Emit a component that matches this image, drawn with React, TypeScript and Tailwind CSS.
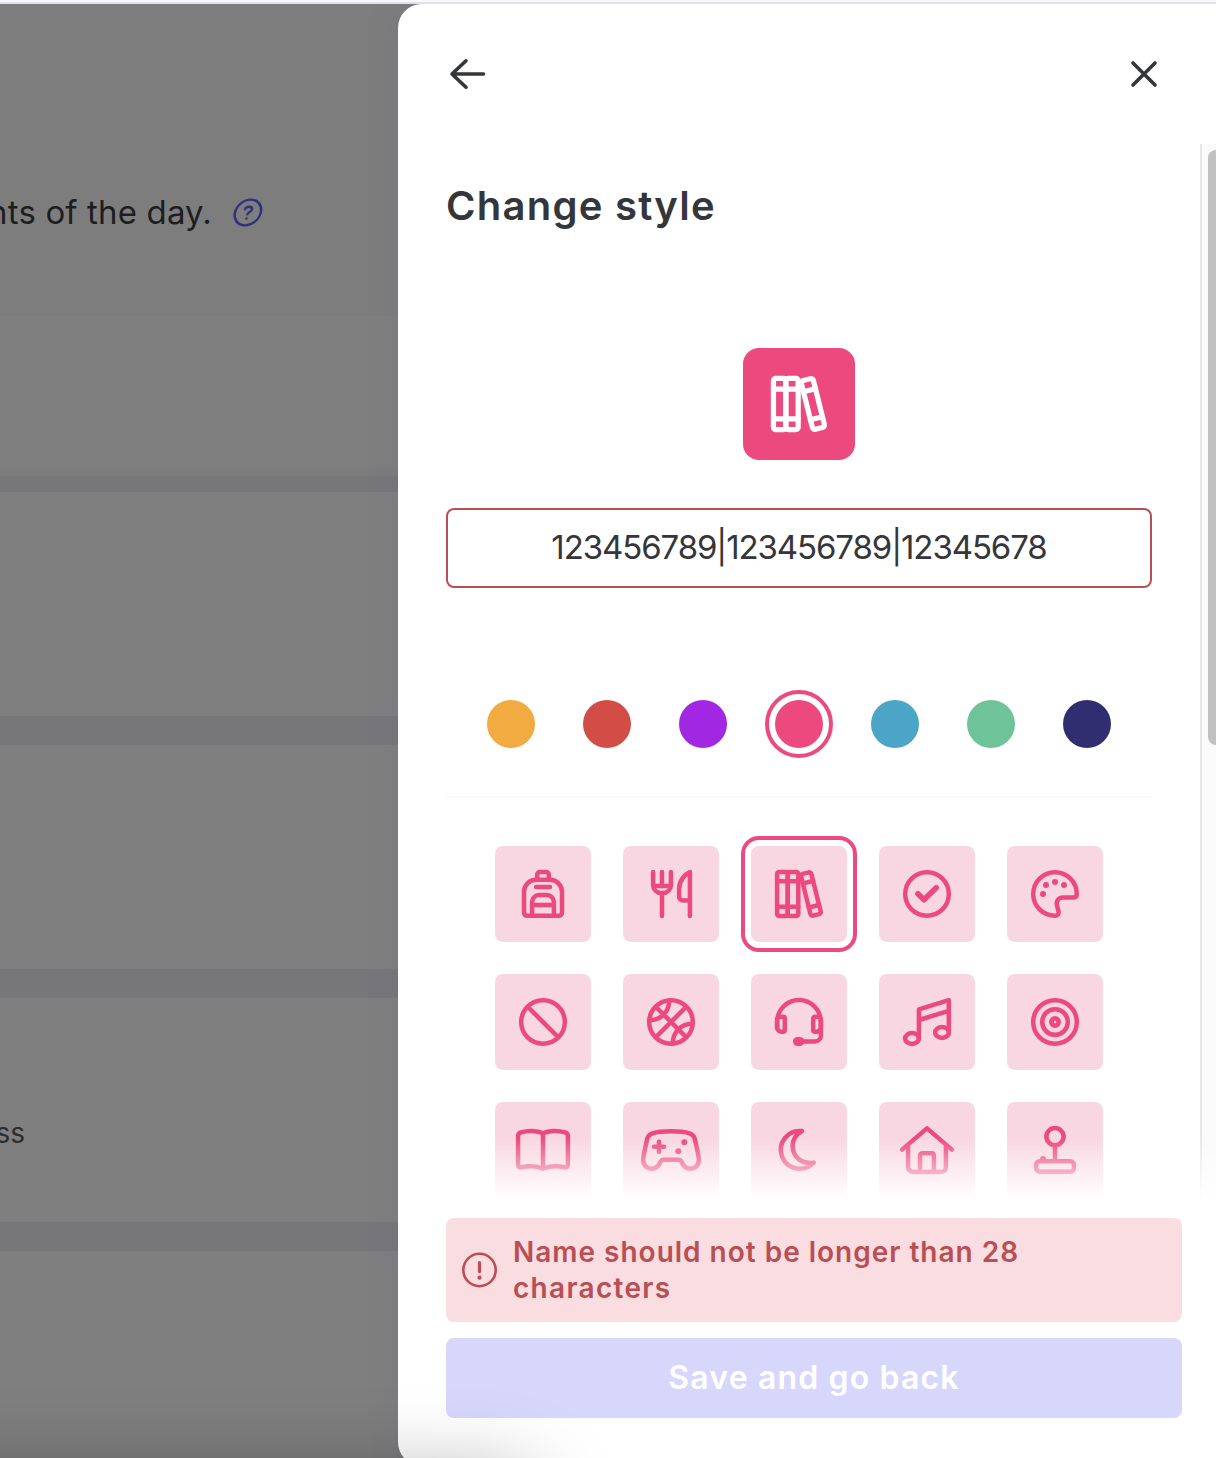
import type { ReactNode } from 'react';

const swatches = ['bg-[#f2ab40]', 'bg-[#d34d47]', 'bg-[#a227e3]', 'bg-[#ec4a7e]', 'bg-[#4aa5c6]', 'bg-[#6ec398]', 'bg-[#302e70]'];

const ring = <circle cx="48" cy="48" r="21.8" />;

function Dot({ x, y, r = 3 }: { x: number; y: number; r?: number }) {
  return <circle cx={x} cy={y} r={r} fill="currentColor" stroke="none" />;
}

const books = (
  <>
    <rect x="26.1" y="26.1" width="10.6" height="43.8" rx="2" />
    <rect x="36.7" y="26.1" width="10.6" height="43.8" rx="2" />
    <path d="M26.1 35.3h21.2M26.1 60.7h21.2" />
    <g transform="rotate(-14 60 48)">
      <rect x="54.600" y="26.500" width="10.600" height="43" rx="2.200" />
      <path d="M54.600 35.800h10.600M54.600 60.600h10.600" />
    </g>
  </>
);

const icons: { name: string; art: ReactNode }[] = [
  {
    name: 'Backpack',
    art: (
      <>
        <path d="M41 33.8h14a12 12 0 0 1 12 12v21a3 3 0 0 1-3 3H32a3 3 0 0 1-3-3v-21a12 12 0 0 1 12-12Z" />
        <path d="M42.2 33V28.6a2.5 2.5 0 0 1 2.5-2.5h6.6a2.5 2.5 0 0 1 2.5 2.5V33M41 41.1h14M37.1 69.5V56a7 7 0 0 1 7-7h7.8a7 7 0 0 1 7 7v13.5M37.1 59h21.8" />
      </>
    ),
  },
  {
    name: 'Meal',
    art: (
      <path d="M30.1 26.1v13a8 8 0 0 0 8 8h1.8a8 8 0 0 0 8-8v-13M39 26.1v14M30.1 40h17.8M39 47v22.9M66.9 26.1v43.8M66.9 26.1C62 28 56.1 34.5 56.1 43v7.7a3.9 3.9 0 0 0 3.9 3.9h6.9" />
    ),
  },
  { name: 'Books', art: books },
  { name: 'Check', art: <>{ring}<path strokeWidth="5.6" d="M38.9 47.7l6.1 6.1 12.2-12" /></> },
  {
    name: 'Palette',
    art: (
      <>
        <path d="M69.8 48A21.8 21.8 0 1 0 48 69.8c3 0 4.2-2 3.5-4.6l-1.4-5.2c-1.3-4.8 1-8.4 6.2-8.4H66c2.4 0 3.8-1.2 3.8-3.6Z" />
        <Dot x={36} y={48} /><Dot x={39} y={39} /><Dot x={48} y={36} /><Dot x={57} y={39} />
      </>
    ),
  },
  { name: 'Ban', art: <>{ring}<path d="M33 33l30 30" /></> },
  {
    name: 'Basketball',
    art: <>{ring}<path d="M33 33l30 30M63 33L33 63M46.2 26.5C46.2 38 38 46.2 26.5 46.2M49.8 69.5C49.8 58 58 49.8 69.5 49.8" /></>,
  },
  {
    name: 'Headset',
    art: (
      <>
        <path d="M26.1 53.5V48a21.9 21.9 0 0 1 43.8 0v13.5a6 6 0 0 1-6 6H49" />
        <path d="M26.1 46a3.2 3.2 0 0 1 3.2-3.2h2.9a1.6 1.6 0 0 1 1.6 1.6v11.8a1.6 1.6 0 0 1-1.6 1.6h-1.6a4.5 4.5 0 0 1-4.5-4.5ZM69.9 46a3.2 3.2 0 0 0-3.2-3.2h-2.9a1.6 1.6 0 0 0-1.6 1.6v11.8a1.6 1.6 0 0 0 1.6 1.6h1.6a4.5 4.5 0 0 0 4.5-4.5Z" />
        <rect x="42" y="63" width="11.4" height="9" rx="4.5" fill="currentColor" stroke="none" />
      </>
    ),
  },
  {
    name: 'Music',
    art: (
      <>
        <path d="M39.9 64.5V35.3l29.9-9.2v32.4M40 46l29.8-9.2" />
        <ellipse cx="33" cy="64.5" rx="6.9" ry="5.4" />
        <ellipse cx="63" cy="58.5" rx="6.9" ry="5.4" />
      </>
    ),
  },
  { name: 'Target', art: <>{ring}<circle cx="48" cy="48" r="12.8" /><circle cx="48" cy="48" r="3.6" strokeWidth="4.8" /></> },
  {
    name: 'Open book',
    art: (
      <path d="M48 31.3C42.5 28.4 33 28.2 26 30.4c-2 .6-2.9 1.6-2.9 3.6v28.3c0 2.6 1.2 3.6 3.8 3C34 63.7 42 64 48 66.7c6-2.7 14-3 21.1-1.4 2.6.6 3.8-.4 3.8-3V34c0-2-.9-3-2.9-3.6-7-2.2-16.500-2-22 .9ZM48 31.3v35" />
    ),
  },
  {
    name: 'Gamepad',
    art: (
      <>
        <path d="M48 29.2c-8 0-14 .6-18.500 2.1-3.300 1.100-4.900 3-5.500 6.200-1.500 8-3.400 14-3.800 19.500-.4 5.800 3.300 9.800 8.300 9.800 3.600 0 6.300-1.800 7.900-4.900l1.400-2.700c.6-1.100 1.300-1.500 2.500-1.500h15.400c1.200 0 1.900.4 2.500 1.500l1.400 2.700c1.600 3.100 4.300 4.900 7.900 4.900 5 0 8.700-4 8.300-9.800-.4-5.500-2.300-11.500-3.800-19.500-.6-3.200-2.200-5.100-5.500-6.200C62 29.800 56 29.200 48 29.200Z" />
        <path d="M31 44.700h10M36 39.700v10" />
        <Dot x={61.3} y={40.3} /><Dot x={55.3} y={49.3} />
      </>
    ),
  },
  {
    name: 'Moon',
    art: <path d="M51 29.100A18.900 18.900 0 1 0 62.700 60.600C51 62.500 41.600 55 41.600 44c0-6.300 3.500-11.500 9.400-14.900Z" />,
  },
  {
    name: 'House',
    art: <path d="M23.100 47.600L48 26.400l24.900 21.200M29.100 43v21.900a5 5 0 0 0 5 5h27.800a5 5 0 0 0 5-5V43M41.100 69.500V53.200a2 2 0 0 1 2-2h9.800a2 2 0 0 1 2 2v16.300" />,
  },
  {
    name: 'Joystick',
    art: (
      <>
        <circle cx="48" cy="34.6" r="8.6" />
        <path d="M48 43.500V59" />
        <rect x="29.100" y="59.200" width="37.800" height="10.600" rx="3.600" />
        <Dot x={36} y={57} />
      </>
    ),
  },
];

function TileArt({ children, className }: { children: ReactNode; className: string }) {
  return (
    <svg viewBox="0 0 96 96" className={className} fill="none" stroke="currentColor" strokeWidth="4.5" strokeLinecap="round" strokeLinejoin="round">
      {children}
    </svg>
  );
}

function Backdrop() {
  return (
    <div className="flex w-[398px] shrink-0 flex-col bg-[#777779]">
      <div className="h-[312px] bg-[#7d7d7d] pt-[184px]">
        <div className="flex w-[264px] items-center justify-end gap-[20px]">
          <p className="text-[33px] leading-[48px] tracking-[0.15px] whitespace-nowrap text-[#1d1e1f]">nts of the day.</p>
          <svg viewBox="0 0 32 32" className="size-8 shrink-0" fill="none" stroke="#302e80" strokeWidth="2.4" strokeLinecap="round" strokeLinejoin="round">
            <g transform="translate(3.7 0) skewX(-13)">
              <circle cx="16" cy="16.5" r="12.9" />
              <path d="M12.5 13.3c.2-1.800 1.500-2.600 3.400-2.600 2.200 0 3.500 1.100 3.500 2.900 0 2.300-3.400 2.300-3.400 4.700M16 22.500v.1" />
            </g>
          </svg>
        </div>
      </div>
      <div className="h-[160px] bg-linear-to-b from-[#7f7f7f] from-90% to-[#7b7b7c]" />
      <div className="mt-4 h-[224px] bg-[#7f7f7f]" />
      <div className="mt-[29px] h-[224px] bg-[#7f7f7f]" />
      <div className="mt-[29px] flex h-[224px] w-[398px] bg-[#7f7f7f] pt-[115px]">
        <p className="flex w-[25px] justify-end text-[28px] leading-10 whitespace-nowrap text-[#2c2c2d]">ss</p>
      </div>
      <div className="mt-[29px] h-[220px] bg-[#7f7f7f]" />
    </div>
  );
}

function Panel() {
  return (
    <section className="relative flex h-[1462px] min-w-0 flex-1 flex-col rounded-l-[24px] bg-white shadow-[0_0_32px_rgba(90,80,140,0.14)]">
      <header className="flex h-[140px] shrink-0 items-start justify-between pt-[50px] pr-[52px] pl-[48px]">
        <button aria-label="Back">
          <svg viewBox="0 0 40 40" className="size-10" fill="none" stroke="#35363a" strokeWidth="3.6" strokeLinecap="round" strokeLinejoin="round">
            <path d="M37.5 20H6M20 6.800L6 20 20 33.200" />
          </svg>
        </button>
        <button aria-label="Close">
          <svg viewBox="0 0 40 40" className="size-10" fill="none" stroke="#35363a" strokeWidth="3.6" strokeLinecap="round">
            <path d="M9 9l22 22M31 9L9 31" />
          </svg>
        </button>
      </header>

      <div className="relative flex h-[1056px] shrink-0 overflow-hidden">
        <div className="flex w-[802px] flex-col px-12 pt-8">
          <h1 className="text-[40px] leading-[60px] font-semibold tracking-[1.25px] whitespace-nowrap text-[#35363a]">Change style</h1>
          <div className="mt-[112px] size-28 shrink-0 self-center rounded-[16px] bg-[#ec4a7e] text-white">
            <TileArt className="size-28">{books}</TileArt>
          </div>
          <div className="mt-12 flex h-20 w-[706px] shrink-0 items-center justify-center rounded-[8px] border-2 border-[#b94f54] text-[33px] text-[#35363a]">
            <span className="tracking-[-1.1px]">123456789|123456789|12345678</span>
          </div>
          <div className="mt-28 flex shrink-0 justify-center gap-12">
            {swatches.map((color, i) => (
              <button
                key={color}
                aria-label={`Colour ${i + 1}`}
                className={`size-12 rounded-full ${color} ${i === 3 ? 'outline-4 outline-offset-[6px] outline-[#ec4a7e]' : ''}`}
              />
            ))}
          </div>
          <hr className="mt-12 h-0 w-[706px] shrink-0 border-t-2 border-[#f7f7ff]" />
          <div className="mt-12 grid shrink-0 grid-cols-[repeat(5,96px)] justify-center gap-8">
            {icons.map(({ name, art }) => (
              <button
                key={name}
                aria-label={name}
                className={`size-24 rounded-[8px] bg-[#f9d7e2] text-[#ec4a7e] ${name === 'Books' ? 'outline-4 outline-offset-[6px] outline-[#ec4a7e]' : ''}`}
              >
                <TileArt className="size-24">{art}</TileArt>
              </button>
            ))}
          </div>
        </div>
        <div className="h-full w-4 border-l-2 border-[#e7e7e7] bg-[#fafafa] pt-[6px] pl-[6px]">
          <div className="h-[595px] w-2 rounded-l-[8px] bg-[#c1c1c1]" />
        </div>
        <div className="pointer-events-none absolute inset-x-0 bottom-0 h-[62px] bg-linear-to-b from-white/0 to-white" />
      </div>

      <footer className="flex flex-col gap-4 pt-[18px] pl-12">
        <div className="flex h-[104px] w-[736px] items-center gap-[13px] rounded-[8px] bg-[#f9dde0] pl-[14px] text-[#b94f54]">
          <svg viewBox="0 0 40 40" className="size-10 shrink-0" fill="none" stroke="currentColor" strokeLinecap="round">
            <circle cx="19.5" cy="20" r="16.2" strokeWidth="2.6" />
            <path d="M19.5 12.7v8.8" strokeWidth="3.3" />
            <circle cx="19.5" cy="27.7" r="2.1" fill="currentColor" stroke="none" />
          </svg>
          <p className="text-[28px] leading-9 font-semibold">
            <span className="tracking-[0.99px]">Name should not be longer than 28</span>
            <br />
            <span className="tracking-[1.3px]">characters</span>
          </p>
        </div>
        <button className="flex h-20 w-[736px] items-center justify-center rounded-[8px] bg-[#d7d7fb] text-[32px] font-semibold text-white">
          <span className="tracking-[1.15px]">Save and go back</span>
        </button>
      </footer>
    </section>
  );
}

export default function App() {
  return (
    <div className="relative h-[1458px] w-[1216px] overflow-hidden font-['Inter',sans-serif]">
      <div className="h-1 border-b-2 border-[#e2e0ec] bg-[#f8f7fc]" />
      <div className="flex h-[1454px] items-start overflow-hidden bg-[#7d7d7d]">
        <Backdrop />
        <Panel />
      </div>
      <div className="pointer-events-none absolute top-[1480px] -left-[200px] h-[120px] w-[730px] rounded-[20px] shadow-[0_0_84px_rgba(0,0,0,0.36)]" />
    </div>
  );
}
